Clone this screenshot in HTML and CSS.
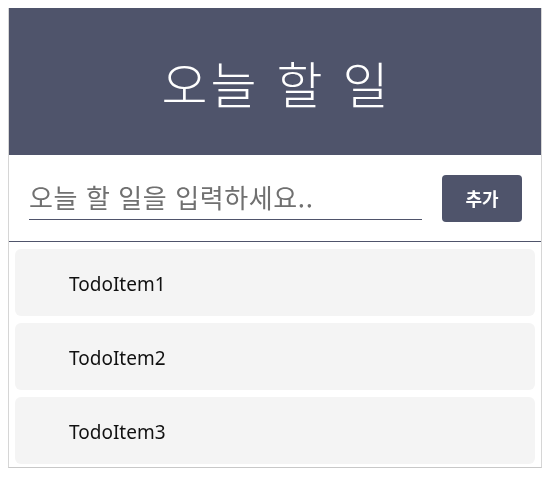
FILE: index.html
```html
<!DOCTYPE html>
<html lang="ko">
<head>
<meta charset="utf-8">
<title>오늘 할 일</title>
<link rel="stylesheet" href="styles.css">
</head>
<body>
<div class="todo">
  <header class="todo-header">
    <h1 class="todo-title">오늘 할 일</h1>
  </header>
  <form class="todo-form">
    <input class="todo-input" type="text" placeholder="오늘 할 일을 입력하세요..">
    <button class="todo-add" type="button">추가</button>
  </form>
  <ul class="todo-list">
    <li class="todo-item">TodoItem1</li>
    <li class="todo-item">TodoItem2</li>
    <li class="todo-item">TodoItem3</li>
  </ul>
</div>
</body>
</html>
```
FILE: styles.css
```css
* { box-sizing: border-box; }
html, body { background: #ffffff; }
body {
  margin: 8px;
  font-family: "Noto Sans", "Noto Sans CJK KR", sans-serif;
}
.todo {
  background: #ffffff;
  border-left: 1px solid #d6d6d6;
  border-right: 1px solid #d6d6d6;
  border-bottom: 1px solid #c8c8c8;
  box-shadow: 0 4px 10px 1px rgba(0, 0, 0, 0.35);
  filter: drop-shadow(0 3px 4px rgba(0, 0, 0, 0.3));
  overflow: hidden;
}
.todo-header {
  background: #4f546b;
  height: 147px;
  display: flex;
  align-items: center;
  justify-content: center;
}
.todo-title {
  margin: 0;
  color: #ffffff;
  font-family: "Noto Sans CJK KR", sans-serif;
  font-weight: 300;
  font-size: 50px;
  letter-spacing: 3px;
  padding-left: 3px;
}
.todo-form {
  margin: 0;
  display: flex;
  align-items: center;
  gap: 20px;
  height: 87px;
  padding: 0 19px 0 20px;
  border-bottom: 1px solid #4f546b;
}
.todo-input {
  flex: 1;
  height: 46px;
  border: none;
  border-bottom: 1px solid #4f546b;
  outline: none;
  padding: 0;
  font-family: "Noto Sans CJK KR", sans-serif;
  font-size: 26px;
  letter-spacing: 0.6px;
  color: #333;
  position: relative;
  top: -1px;
}
.todo-input::placeholder { color: #707070; }
.todo-add {
  width: 80px;
  height: 47px;
  border: none;
  border-radius: 4px;
  background: #4f546b;
  color: #ffffff;
  font-family: "Noto Sans CJK KR", sans-serif;
  font-weight: 700;
  font-size: 18px;
}
.todo-list {
  list-style: none;
  margin: 0;
  padding: 7px 6px 3px;
  display: flex;
  flex-direction: column;
  gap: 7px;
}
.todo-item {
  background: #f4f4f4;
  border-radius: 6px;
  height: 67px;
  display: flex;
  align-items: center;
  padding-left: 54px;
  padding-top: 2px;
  font-size: 19px;
  color: #111;
}
```
